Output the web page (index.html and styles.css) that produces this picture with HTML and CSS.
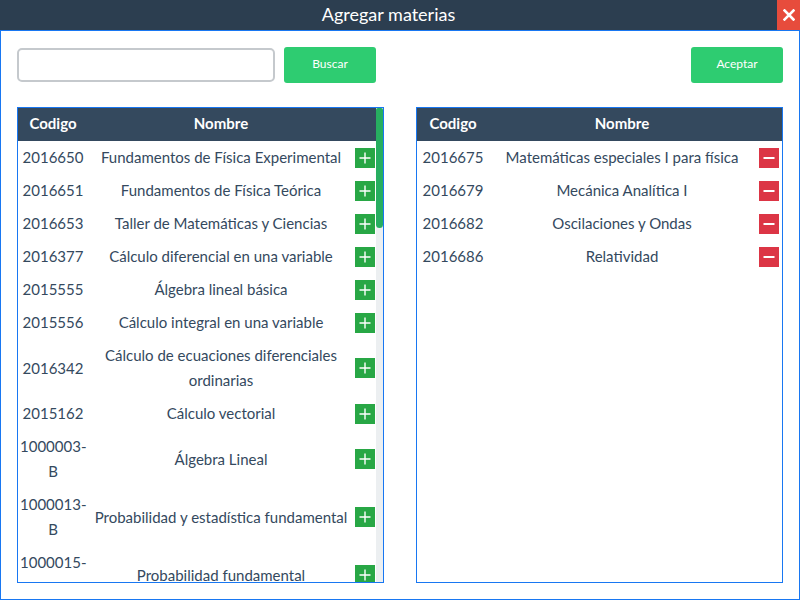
FILE: index.html
```html
<!DOCTYPE html>
<html lang="es">
<head>
<meta charset="utf-8">
<title>Agregar materias</title>
<link rel="stylesheet" href="styles.css">
</head>
<body>
<div class="window">
  <header class="titlebar">
    <h1 class="title">Agregar materias</h1>
    <button class="close" aria-label="Cerrar">
      <svg width="12" height="12" viewBox="0 0 12 12"><path d="M1.5 1.5L10.5 10.5M10.5 1.5L1.5 10.5" stroke="#fff" stroke-width="2.6" stroke-linecap="square"/></svg>
    </button>
  </header>
  <main class="dialog">
    <div class="toolbar">
      <input class="search" type="text">
      <button class="btn">Buscar</button>
      <span class="spacer"></span>
      <button class="btn">Aceptar</button>
    </div>
    <div class="panels">
      <div class="panel">
        <div class="table table-left">
          <div class="row head"><div>Codigo</div><div>Nombre</div><div></div></div>
          <div class="row"><div class="code">2016650</div><div class="name">Fundamentos de Física Experimental</div><div class="act"><span class="add"><svg width="20" height="20" viewBox="0 0 20 20"><path d="M10 4.5V15.5M4.5 10H15.5" stroke="#fff" stroke-width="1.4"/></svg></span></div></div>
          <div class="row"><div class="code">2016651</div><div class="name">Fundamentos de Física Teórica</div><div class="act"><span class="add"><svg width="20" height="20" viewBox="0 0 20 20"><path d="M10 4.5V15.5M4.5 10H15.5" stroke="#fff" stroke-width="1.4"/></svg></span></div></div>
          <div class="row"><div class="code">2016653</div><div class="name">Taller de Matemáticas y Ciencias</div><div class="act"><span class="add"><svg width="20" height="20" viewBox="0 0 20 20"><path d="M10 4.5V15.5M4.5 10H15.5" stroke="#fff" stroke-width="1.4"/></svg></span></div></div>
          <div class="row"><div class="code">2016377</div><div class="name">Cálculo diferencial en una variable</div><div class="act"><span class="add"><svg width="20" height="20" viewBox="0 0 20 20"><path d="M10 4.5V15.5M4.5 10H15.5" stroke="#fff" stroke-width="1.4"/></svg></span></div></div>
          <div class="row"><div class="code">2015555</div><div class="name">Álgebra lineal básica</div><div class="act"><span class="add"><svg width="20" height="20" viewBox="0 0 20 20"><path d="M10 4.5V15.5M4.5 10H15.5" stroke="#fff" stroke-width="1.4"/></svg></span></div></div>
          <div class="row"><div class="code">2015556</div><div class="name">Cálculo integral en una variable</div><div class="act"><span class="add"><svg width="20" height="20" viewBox="0 0 20 20"><path d="M10 4.5V15.5M4.5 10H15.5" stroke="#fff" stroke-width="1.4"/></svg></span></div></div>
          <div class="row"><div class="code">2016342</div><div class="name">Cálculo de ecuaciones diferenciales ordinarias</div><div class="act"><span class="add"><svg width="20" height="20" viewBox="0 0 20 20"><path d="M10 4.5V15.5M4.5 10H15.5" stroke="#fff" stroke-width="1.4"/></svg></span></div></div>
          <div class="row"><div class="code">2015162</div><div class="name">Cálculo vectorial</div><div class="act"><span class="add"><svg width="20" height="20" viewBox="0 0 20 20"><path d="M10 4.5V15.5M4.5 10H15.5" stroke="#fff" stroke-width="1.4"/></svg></span></div></div>
          <div class="row"><div class="code">1000003-B</div><div class="name">Álgebra Lineal</div><div class="act"><span class="add"><svg width="20" height="20" viewBox="0 0 20 20"><path d="M10 4.5V15.5M4.5 10H15.5" stroke="#fff" stroke-width="1.4"/></svg></span></div></div>
          <div class="row"><div class="code">1000013-B</div><div class="name">Probabilidad y estadística fundamental</div><div class="act"><span class="add"><svg width="20" height="20" viewBox="0 0 20 20"><path d="M10 4.5V15.5M4.5 10H15.5" stroke="#fff" stroke-width="1.4"/></svg></span></div></div>
          <div class="row"><div class="code">1000015-B</div><div class="name">Probabilidad fundamental</div><div class="act"><span class="add"><svg width="20" height="20" viewBox="0 0 20 20"><path d="M10 4.5V15.5M4.5 10H15.5" stroke="#fff" stroke-width="1.4"/></svg></span></div></div>
        </div>
        <div class="scrollbar"><div class="thumb"></div></div>
      </div>
      <div class="panel">
        <div class="table table-right">
          <div class="row head"><div>Codigo</div><div>Nombre</div><div></div></div>
          <div class="row"><div class="code">2016675</div><div class="name">Matemáticas especiales I para física</div><div class="act"><span class="remove"><svg width="20" height="20" viewBox="0 0 20 20"><path d="M4.5 10H15.5" stroke="#fff" stroke-width="2"/></svg></span></div></div>
          <div class="row"><div class="code">2016679</div><div class="name">Mecánica Analítica I</div><div class="act"><span class="remove"><svg width="20" height="20" viewBox="0 0 20 20"><path d="M4.5 10H15.5" stroke="#fff" stroke-width="2"/></svg></span></div></div>
          <div class="row"><div class="code">2016682</div><div class="name">Oscilaciones y Ondas</div><div class="act"><span class="remove"><svg width="20" height="20" viewBox="0 0 20 20"><path d="M4.5 10H15.5" stroke="#fff" stroke-width="2"/></svg></span></div></div>
          <div class="row"><div class="code">2016686</div><div class="name">Relatividad</div><div class="act"><span class="remove"><svg width="20" height="20" viewBox="0 0 20 20"><path d="M4.5 10H15.5" stroke="#fff" stroke-width="2"/></svg></span></div></div>
        </div>
      </div>
    </div>
  </main>
</div>
</body>
</html>
```

FILE: styles.css
```css
* { box-sizing: border-box; }
html, body { margin: 0; padding: 0; }
body {
  width: 800px;
  height: 600px;
  overflow: hidden;
  font-family: Lato, "Open Sans", sans-serif;
  background: #fff;
  color: #34495e;
}
.window {
  display: flex;
  flex-direction: column;
  width: 800px;
  height: 600px;
}
.titlebar {
  display: flex;
  height: 30px;
  background: #2c3e50;
  flex: none;
}
.title {
  flex: 1;
  margin: 0;
  font-size: 18px;
  font-weight: 400;
  line-height: 29px;
  text-align: center;
  color: #fff;
}
.close {
  width: 23px;
  height: 30px;
  border: 0;
  padding: 0;
  background: #e74c3c;
  display: flex;
  align-items: center;
  justify-content: center;
}
.dialog {
  flex: 1;
  display: flex;
  flex-direction: column;
  gap: 24px;
  padding: 16px;
  border: 1px solid #1877f2;
  min-height: 0;
}
.toolbar {
  display: flex;
  align-items: center;
  height: 36px;
  flex: none;
}
.search {
  width: 258px;
  height: 34px;
  border: 2px solid #c5c9cd;
  border-radius: 5px;
  margin: 0 9px 0 0;
  padding: 0 8px;
  font: inherit;
}
.btn {
  width: 92px;
  height: 36px;
  border: 0;
  border-radius: 3px;
  background: #2ecc71;
  color: #fff;
  font-family: Lato, sans-serif;
  font-size: 12px;
  line-height: 34px;
  padding: 0 0 2px;
}
.spacer { flex: 1; }
.panels {
  flex: 1;
  display: flex;
  gap: 32px;
  min-height: 0;
}
.panel {
  flex: 1;
  display: flex;
  border: 1px solid #1877f2;
  min-height: 0;
}
.table {
  flex: 1;
  overflow: hidden;
  font-size: 15px;
  line-height: 25px;
}
.table-left { --cols: 70px 1fr 22px; }
.table-right { --cols: 72px 1fr 27px; }
.scrollbar {
  width: 7px;
  flex: none;
  background: #eceff1;
}
.thumb {
  height: 120px;
  background: #27ae60;
  border-radius: 2px 2px 4px 4px;
}
.row {
  display: grid;
  grid-template-columns: var(--cols);
  align-items: center;
  text-align: center;
  padding: 4px 0;
}
.row > div { padding: 0 2px; }
.head {
  background: #34495e;
  color: #fff;
  font-weight: 700;
  height: 33px;
  padding: 3px 0 5px;
}
.act {
  display: flex;
  justify-content: center;
}
.add, .remove {
  display: block;
  width: 20px;
  height: 20px;
  flex: none;
}
.add { background: #28a745; }
.remove { background: #dc3545; }
.add svg, .remove svg { display: block; }
```
